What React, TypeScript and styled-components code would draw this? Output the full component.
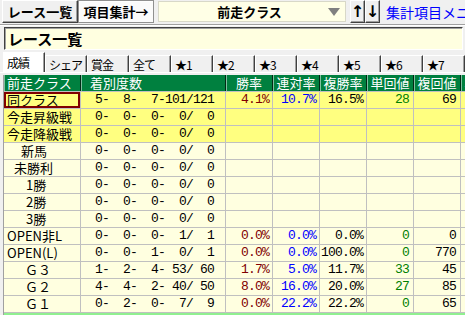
import React from "react";
import styled, { createGlobalStyle } from "styled-components";

const GlobalStyle = createGlobalStyle`
	html, body {
		margin: 0;
		padding: 0;
	}
	body {
		background: #f0f0f0;
		font-family: "Noto Sans CJK JP", "Liberation Sans", sans-serif;
	}
`;

type Row = {
	label: string;
	indent: number;
	counts: string;
	win?: string;
	place?: string;
	show?: string;
	winRet?: string;
	showRet?: string;
	tone: "hot" | "plain";
	selected?: boolean;
};

const rows: Row[] = [
	{ label: "同クラス", indent: 3, counts: "  5-  8-  7-101/121", win: "4.1%", place: "10.7%", show: "16.5%", winRet: "28", showRet: "69", tone: "hot", selected: true },
	{ label: "今走昇級戦", indent: 3, counts: "  0-  0-  0-  0/  0", tone: "hot" },
	{ label: "今走降級戦", indent: 3, counts: "  0-  0-  0-  0/  0", tone: "hot" },
	{ label: "新馬", indent: 17, counts: "  0-  0-  0-  0/  0", tone: "plain" },
	{ label: "未勝利", indent: 10, counts: "  0-  0-  0-  0/  0", tone: "plain" },
	{ label: "1勝", indent: 22, counts: "  0-  0-  0-  0/  0", tone: "plain" },
	{ label: "2勝", indent: 22, counts: "  0-  0-  0-  0/  0", tone: "plain" },
	{ label: "3勝", indent: 22, counts: "  0-  0-  0-  0/  0", tone: "plain" },
	{ label: "OPEN非L", indent: 3, counts: "  0-  0-  0-  1/  1", win: "0.0%", place: "0.0%", show: "0.0%", winRet: "0", showRet: "0", tone: "plain" },
	{ label: "OPEN(L)", indent: 3, counts: "  0-  0-  1-  0/  1", win: "0.0%", place: "0.0%", show: "100.0%", winRet: "0", showRet: "770", tone: "plain" },
	{ label: "Ｇ３", indent: 21, counts: "  1-  2-  4- 53/ 60", win: "1.7%", place: "5.0%", show: "11.7%", winRet: "33", showRet: "45", tone: "plain" },
	{ label: "Ｇ２", indent: 21, counts: "  4-  4-  2- 40/ 50", win: "8.0%", place: "16.0%", show: "20.0%", winRet: "27", showRet: "85", tone: "plain" },
	{ label: "Ｇ１", indent: 21, counts: "  0-  2-  0-  7/  9", win: "0.0%", place: "22.2%", show: "22.2%", winRet: "0", showRet: "65", tone: "plain" },
];

const tabs = ["成績", "シェア", "賞金", "全て", "★1", "★2", "★3", "★4", "★5", "★6", "★7"];

const App = () => {
	return (
		<>
			<GlobalStyle />
			<Window>
				<Toolbar>
					<ToolButton>レース一覧</ToolButton>
					<ToolButton $pressed>項目集計→</ToolButton>
					<Combo>
						<ComboText>前走クラス</ComboText>
						<ComboArrow />
					</Combo>
					<ArrowPair>
						<ArrowButton>↑</ArrowButton>
						<ArrowButton>↓</ArrowButton>
					</ArrowPair>
					<MenuLink>集計項目メニュー</MenuLink>
				</Toolbar>
				<TitleField>レース一覧</TitleField>
				<TabStrip>
					{tabs.map((t, i) => (
						<Tab key={t} $active={i === 0}>
							{t}
						</Tab>
					))}
				</TabStrip>
				<Grid>
					<HeaderRow>
						<HeadCell $align="left" $pad={3}>前走クラス</HeadCell>
						<HeadCell $align="left" $pad={9}>着別度数</HeadCell>
						<HeadCell>勝率</HeadCell>
						<HeadCell>連対率</HeadCell>
						<HeadCell>複勝率</HeadCell>
						<HeadCell>単回値</HeadCell>
						<HeadCell>複回値</HeadCell>
						<HeadCell>単回収</HeadCell>
						<HeadCell>複回収</HeadCell>
					</HeaderRow>
					{rows.map((r) => (
						<DataRow key={r.label} $tone={r.tone}>
							<LabelCell $indent={r.indent} $selected={r.selected}>
								{r.label}
							</LabelCell>
							<NumCell $padRight={11}>{r.counts}</NumCell>
							<NumCell $color="#800000">{r.win}</NumCell>
							<NumCell $color="#0000ff">{r.place}</NumCell>
							<NumCell>{r.show}</NumCell>
							<NumCell $color="#008000" $padRight={4}>{r.winRet}</NumCell>
							<NumCell $padRight={4}>{r.showRet}</NumCell>
							<NumCell />
							<NumCell />
						</DataRow>
					))}
					<GridFoot />
				</Grid>
			</Window>
		</>
	);
};

export default App;

const columns = "77px 145px repeat(7, 47px)";

const Window = styled.div`
	width: 465px;
	height: 315px;
	overflow: hidden;
	display: flex;
	flex-direction: column;
	background: #f0f0f0;
`;

const Toolbar = styled.div`
	display: flex;
	align-items: flex-start;
	flex-shrink: 0;
	height: 25px;
	box-sizing: border-box;
	padding-left: 2px;
	overflow: hidden;
	border-bottom: 1px solid #a0a0a0;
	box-shadow: 0 1px 0 #ffffff;
	& > * {
		flex-shrink: 0;
	}
`;

const ToolButton = styled.div<{ $pressed?: boolean }>`
	width: 76px;
	height: 23px;
	box-sizing: border-box;
	display: flex;
	align-items: center;
	justify-content: center;
	font-size: 13px;
	font-weight: bold;
	white-space: nowrap;
	color: #000;
	background: ${(p) => (p.$pressed ? "#fbfbfb" : "#f0f0f0")};
	border: 1px solid;
	border-color: #ffffff #404040 #404040 #ffffff;
	box-shadow: inset -1px -1px 0 #a0a0a0;
	${(p) => p.$pressed && "border-color: #909090; box-shadow: inset 1px 1px 0 #ffffff;"}
`;

const Combo = styled.div`
	margin-left: 4px;
	margin-top: 1px;
	width: 188px;
	height: 21px;
	box-sizing: border-box;
	display: flex;
	align-items: center;
	background: #ffffe6;
	border: 1px solid #d8d8c8;
`;

const ComboText = styled.div`
	flex: 1;
	text-align: center;
	font-size: 13px;
	font-weight: bold;
	white-space: nowrap;
	padding-left: 12px;
`;

const ComboArrow = styled.div`
	width: 0;
	height: 0;
	margin-right: 5px;
	border-left: 6px solid transparent;
	border-right: 6px solid transparent;
	border-top: 8px solid #808080;
`;

const ArrowPair = styled.div`
	display: flex;
	margin-left: 4px;
`;

const ArrowButton = styled.div`
	width: 15px;
	height: 23px;
	box-sizing: border-box;
	display: flex;
	align-items: center;
	justify-content: center;
	font-family: "DejaVu Sans", sans-serif;
	font-size: 16px;
	font-weight: bold;
	background: #f0f0f0;
	border: 1px solid;
	border-color: #ffffff #404040 #404040 #ffffff;
	box-shadow: inset -1px -1px 0 #a0a0a0;
`;

const MenuLink = styled.div`
	margin-left: 6px;
	margin-top: 2px;
	font-size: 14px;
	color: #0000ff;
	white-space: nowrap;
`;

const TitleField = styled.div`
	flex-shrink: 0;
	margin: 2px 2px 0 4px;
	height: 23px;
	box-sizing: border-box;
	padding-left: 3px;
	display: flex;
	align-items: center;
	background: #ffffe0;
	border: 1px solid;
	border-color: #404040 #ffffff #ffffff #404040;
	box-shadow: inset 1px 1px 0 #a0a0a0;
	font-size: 15px;
	font-weight: bold;
	white-space: nowrap;
`;

const TabStrip = styled.div`
	display: flex;
	flex-shrink: 0;
	height: 20px;
	margin-top: 2px;
	padding-left: 3px;
	align-items: flex-end;
	border-bottom: 1px solid #ffffff;
	& > * {
		flex-shrink: 0;
	}
`;

const Tab = styled.div<{ $active?: boolean }>`
	width: 42px;
	height: ${(p) => (p.$active ? "20px" : "17px")};
	box-sizing: border-box;
	display: flex;
	align-items: center;
	padding-left: 3px;
	font-size: 12px;
	letter-spacing: -1px;
	white-space: nowrap;
	color: #000;
	background: ${(p) => (p.$active ? "#ffffff" : "#f0f0f0")};
	border-top: 1px solid #ffffff;
	border-left: 1px solid #ffffff;
	border-right: 1px solid #404040;
	box-shadow: inset -1px 0 0 #a0a0a0;
`;

const Grid = styled.div`
	margin-top: 2px;
	margin-left: 3px;
	flex: 1;
	overflow: hidden;
	border-left: 1px solid #a0a0a0;
`;

const HeaderRow = styled.div`
	display: grid;
	grid-template-columns: ${columns};
	height: 17px;
	background: #00803f;
	border-bottom: 1px solid #c0c0c0;
	box-sizing: border-box;
`;

const HeadCell = styled.div<{ $align?: "left" | "center"; $pad?: number }>`
	box-sizing: border-box;
	color: #ffffff;
	font-size: 13px;
	line-height: 16px;
	white-space: nowrap;
	overflow: hidden;
	text-align: ${(p) => p.$align ?? "center"};
	padding-left: ${(p) => p.$pad ?? 0}px;
	border-right: 1px solid #002a14;
	box-shadow: inset 1px 0 0 #7fbf9f;
`;

const DataRow = styled.div<{ $tone: "hot" | "plain" }>`
	display: grid;
	grid-template-columns: ${columns};
	height: 17px;
	box-sizing: border-box;
	background: ${(p) => (p.$tone === "hot" ? "#ffff80" : "#ffffe0")};
	border-bottom: 1px solid #c0c0c0;
`;

const LabelCell = styled.div<{ $indent: number; $selected?: boolean }>`
	box-sizing: border-box;
	font-size: 13px;
	line-height: 16px;
	white-space: nowrap;
	overflow: hidden;
	padding-left: ${(p) => p.$indent}px;
	border-right: 1px solid #c0c0c0;
	${(p) => p.$selected && "box-shadow: inset 0 0 0 2px #800000;"}
`;

const NumCell = styled.div<{ $color?: string; $padRight?: number }>`
	box-sizing: border-box;
	font-family: "Liberation Mono", monospace;
	font-size: 13px;
	letter-spacing: -0.8px;
	line-height: 16px;
	white-space: pre;
	overflow: hidden;
	text-align: right;
	color: ${(p) => p.$color ?? "#000000"};
	padding-right: ${(p) => p.$padRight ?? 3}px;
	border-right: 1px solid #c0c0c0;
`;

const GridFoot = styled.div`
	height: 2px;
	background: #90f090;
`;
